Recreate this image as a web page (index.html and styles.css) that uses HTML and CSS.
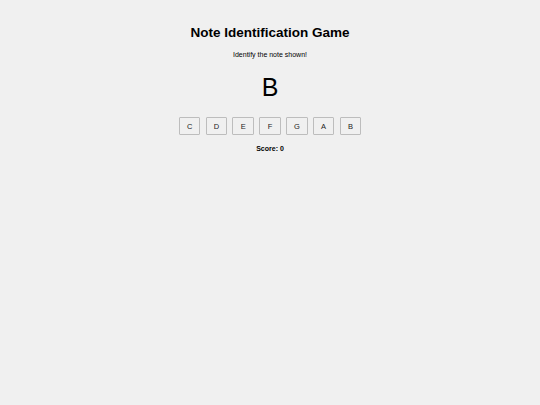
FILE: index.html
```html
<!DOCTYPE html>
<html>
<head>
<meta charset="utf-8">
<link rel="stylesheet" href="styles.css">
</head>
<body>
<div class="game">
  <h1 class="title">Note Identification Game</h1>
  <p class="subtitle">Identify the note shown!</p>
  <div class="note">B</div>
  <div class="choices">
    <button class="choice">C</button>
    <button class="choice">D</button>
    <button class="choice">E</button>
    <button class="choice">F</button>
    <button class="choice">G</button>
    <button class="choice">A</button>
    <button class="choice">B</button>
  </div>
  <p class="score">Score: 0</p>
</div>
</body>
</html>
```
FILE: styles.css
```css
html, body {
  margin: 0;
  padding: 0;
  background: #f0f0f0;
}
body {
  font-family: "Liberation Sans", Arial, sans-serif;
  color: #000;
}
.game {
  display: flex;
  flex-direction: column;
  align-items: center;
  padding-top: 24px;
}
.title {
  margin: 0;
  font-size: 13.5px;
  font-weight: bold;
  line-height: 18px;
}
.subtitle {
  margin: 8px 0 0;
  font-size: 7px;
  line-height: 9px;
}
.note {
  margin-top: 13px;
  font-size: 25px;
  line-height: 30px;
}
.choices {
  display: flex;
  gap: 5.3px;
  margin-top: 15px;
}
.choice {
  box-sizing: border-box;
  width: 21.5px;
  height: 18px;
  padding: 0;
  margin: 0;
  border: 1px solid #bdbdbd;
  border-radius: 1px;
  background: #f0f0f0;
  font-family: "Liberation Sans", Arial, sans-serif;
  font-size: 7.5px;
  color: #222;
}
.score {
  margin: 9px 0 0;
  font-size: 7px;
  font-weight: bold;
  line-height: 9px;
}
```
